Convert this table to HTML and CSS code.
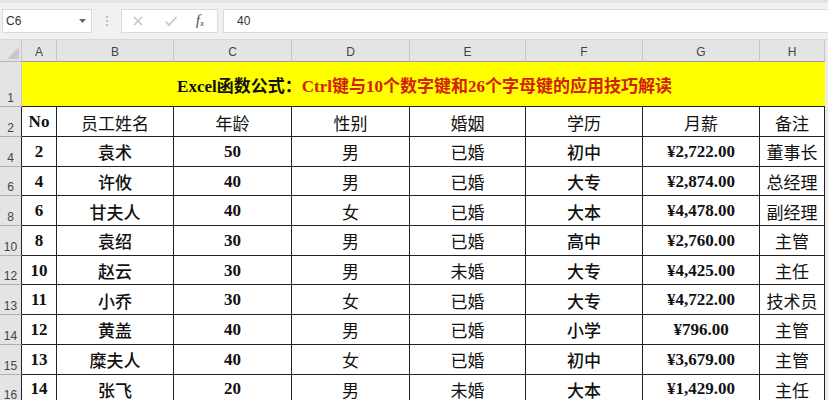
FILE: index.html
```html
<!DOCTYPE html>
<html lang="zh">
<head>
<meta charset="utf-8">
<title>Excel</title>
<link rel="stylesheet" href="styles.css">
</head>
<body>
<div class="app">
  <div class="toolbar">
    <div class="namebox"><span>C6</span><svg class="caret" width="7" height="4" viewBox="0 0 7 4"><path d="M0 0h7L3.5 4z" fill="#666"/></svg></div>
    <div class="grip"><i></i><i></i><i></i></div>
    <div class="fxbox">
      <svg class="ic" width="12" height="12" viewBox="0 0 12 12"><path d="M2 2l8 8M10 2l-8 8" stroke="#c4c4c4" stroke-width="1.5"/></svg>
      <svg class="ic" width="14" height="12" viewBox="0 0 14 12"><path d="M1.5 6.5l3.5 3.5 7.5-8" stroke="#c4c4c4" stroke-width="1.6" fill="none"/></svg>
      <span class="fx">f<sub>x</sub></span>
    </div>
    <div class="formula">40</div>
  </div>
  <div class="sheet">
    <div class="corner"><svg width="12" height="12" viewBox="0 0 12 12"><path d="M12 0v12H0z" fill="#c8c8c8"/></svg></div>
    <div class="ch">A</div><div class="ch">B</div><div class="ch">C</div><div class="ch">D</div><div class="ch">E</div><div class="ch">F</div><div class="ch">G</div><div class="ch">H</div>
    <div class="filler"></div>

    <div class="rh rh-title">1</div>
    <div class="title"><span class="blk">Excel函数公式：</span><span class="red">Ctrl键与10个数字键和26个字母键的应用技巧解读</span></div>
    <div class="filler"></div>

    <div class="rh">2</div>
    <div class="c b">No</div><div class="c">员工姓名</div><div class="c">年龄</div><div class="c">性别</div><div class="c">婚姻</div><div class="c">学历</div><div class="c">月薪</div><div class="c">备注</div>
    <div class="filler"></div>

    <div class="rh">4</div>
    <div class="c b">2</div><div class="c m">袁术</div><div class="c b">50</div><div class="c">男</div><div class="c">已婚</div><div class="c m">初中</div><div class="c b">¥2,722.00</div><div class="c">董事长</div>
    <div class="filler"></div>

    <div class="rh">6</div>
    <div class="c b">4</div><div class="c m">许攸</div><div class="c b">40</div><div class="c">男</div><div class="c">已婚</div><div class="c m">大专</div><div class="c b">¥2,874.00</div><div class="c">总经理</div>
    <div class="filler"></div>

    <div class="rh">8</div>
    <div class="c b">6</div><div class="c m">甘夫人</div><div class="c b">40</div><div class="c">女</div><div class="c">已婚</div><div class="c m">大本</div><div class="c b">¥4,478.00</div><div class="c">副经理</div>
    <div class="filler"></div>

    <div class="rh">10</div>
    <div class="c b">8</div><div class="c m">袁绍</div><div class="c b">30</div><div class="c">男</div><div class="c">已婚</div><div class="c m">高中</div><div class="c b">¥2,760.00</div><div class="c">主管</div>
    <div class="filler"></div>

    <div class="rh">12</div>
    <div class="c b">10</div><div class="c m">赵云</div><div class="c b">30</div><div class="c">男</div><div class="c">未婚</div><div class="c m">大专</div><div class="c b">¥4,425.00</div><div class="c">主任</div>
    <div class="filler"></div>

    <div class="rh">13</div>
    <div class="c b">11</div><div class="c m">小乔</div><div class="c b">30</div><div class="c">女</div><div class="c">已婚</div><div class="c m">大专</div><div class="c b">¥4,722.00</div><div class="c">技术员</div>
    <div class="filler"></div>

    <div class="rh">14</div>
    <div class="c b">12</div><div class="c m">黄盖</div><div class="c b">40</div><div class="c">男</div><div class="c">已婚</div><div class="c m">小学</div><div class="c b">¥796.00</div><div class="c">主管</div>
    <div class="filler"></div>

    <div class="rh">15</div>
    <div class="c b">13</div><div class="c m">糜夫人</div><div class="c b">40</div><div class="c">女</div><div class="c">已婚</div><div class="c m">初中</div><div class="c b">¥3,679.00</div><div class="c">主管</div>
    <div class="filler"></div>

    <div class="rh">16</div>
    <div class="c b">14</div><div class="c m">张飞</div><div class="c b">20</div><div class="c">男</div><div class="c">未婚</div><div class="c m">大本</div><div class="c b">¥1,429.00</div><div class="c">主任</div>
    <div class="filler"></div>
  </div>
</div>
</body>
</html>
```
FILE: styles.css
```css
* { box-sizing: border-box; }
html, body { margin: 0; padding: 0; }
body { width: 828px; height: 400px; overflow: hidden; background: #fff; }
.app { width: 828px; height: 400px; overflow: hidden; }

.toolbar {
  height: 40px;
  background: #f1f1f1;
  border-top: 3px solid #e4e4e4;
  border-bottom: 1px solid #d6d6d6;
  display: flex;
  align-items: center;
  padding: 0 0 0 2px;
  font-family: "Liberation Sans", Arial, sans-serif;
}
.namebox {
  width: 90px; height: 24px;
  background: #fff;
  border: 1px solid #dadada;
  display: flex; align-items: center; justify-content: space-between;
  padding: 0 5px 0 3px;
  font-size: 12px; color: #333;
}
.grip { width: 29px; display: flex; flex-direction: column; align-items: center; gap: 2px; }
.grip i { display: block; width: 2px; height: 2px; background: #bcbcbc; }
.fxbox {
  width: 97px; height: 24px;
  background: #fff;
  border: 1px solid #dadada;
  display: flex; align-items: center;
  padding: 0 0 0 10px; gap: 20px;
}
.fx { font-family: "Liberation Serif", serif; font-style: italic; font-size: 14px; color: #444; margin-left: -2px; }
.fx sub { font-size: 9px; vertical-align: -1px; }
.formula {
  flex: 1; height: 24px; margin-left: 5px;
  background: #fff;
  border: 1px solid #dadada; border-right: 0;
  display: flex; align-items: center;
  padding-left: 13px;
  font-size: 12px; color: #333;
}

.sheet {
  display: grid;
  grid-template-columns: 22px 35px 117px 118px 118px 116px 117px 117px 65px 3px;
  grid-template-rows: 22px 45px 30px repeat(9, 29.7px);
  font-family: "Liberation Serif", "Noto Sans CJK SC", serif;
  color: #111;
}
.corner {
  background: #e4e4e4;
  border-right: 1px solid #c6c6c6;
  border-bottom: 1px solid #b8b8b8;
  display: flex; align-items: flex-end; justify-content: flex-end;
  padding: 0 2px 2px 0;
}
.ch {
  background: #e4e4e4;
  border-right: 1px solid #c6c6c6;
  border-bottom: 1px solid #9c9c9c;
  font-family: "Liberation Sans", Arial, sans-serif;
  font-size: 12px; color: #444;
  display: flex; align-items: flex-end; justify-content: center;
  padding-bottom: 2px;
}
.filler { background: #ececec; }
.rh {
  background: #e4e4e4;
  border-right: 1px solid #222;
  border-bottom: 1px solid #b0b0b0;
  font-family: "Liberation Sans", Arial, sans-serif;
  font-size: 12px; color: #444;
  display: flex; align-items: flex-end; justify-content: center;
  padding-bottom: 1px;
}
.rh-title { border-right-color: #c6c6c6; }
.title {
  grid-column: 2 / span 8;
  background: #ffff00;
  border-bottom: 1px solid #222;
  display: flex; align-items: center; justify-content: center;
  font-weight: bold; font-size: 17px;
  padding-left: 2px;
}
.blk { color: #111; }
.red { color: #d2200a; }
.c {
  border-right: 1px solid #222;
  border-bottom: 1px solid #222;
  display: flex; align-items: center; justify-content: center;
  font-size: 17px;
  white-space: nowrap;
  padding-top: 1px;
}
.b { font-weight: bold; }
.m { font-weight: 500; }
```
